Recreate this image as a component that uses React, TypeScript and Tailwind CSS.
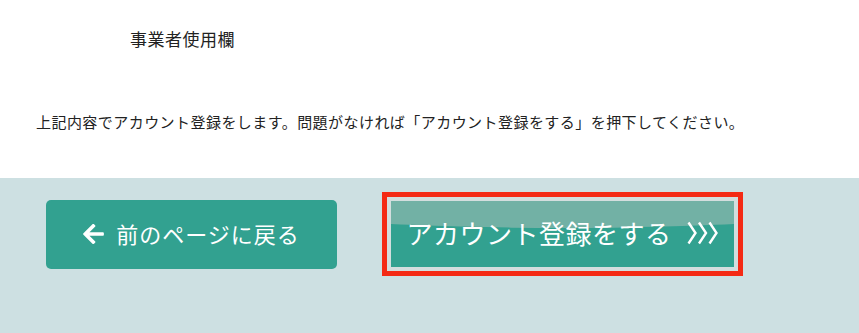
import React from "react";

function ArrowLeft() {
  return (
    <svg width="21" height="20" viewBox="0 40 448 432" fill="white" aria-hidden="true">
      <path d="M257.5 445.1l-22.2 22.2c-9.4 9.4-24.6 9.4-33.9 0L7 273c-9.4-9.4-9.4-24.6 0-33.9L201.4 44.7c9.4-9.4 24.6-9.4 33.9 0l22.2 22.2c9.5 9.5 9.3 25-.4 34.3L136.6 216H424c13.3 0 24 10.7 24 24v32c0 13.3-10.7 24-24 24H136.6l120.5 114.8c9.8 9.3 10 24.8.4 34.3z" />
    </svg>
  );
}

function Chevrons() {
  return (
    <svg width="32" height="24" viewBox="0 0 32 24" fill="none" stroke="white" strokeWidth="2.4" strokeLinejoin="miter" aria-hidden="true">
      <path d="M1.5 1.5 L8.5 12 L1.5 22.5" />
      <path d="M12 1.5 L19 12 L12 22.5" />
      <path d="M22.5 1.5 L29.5 12 L22.5 22.5" />
    </svg>
  );
}

export default function App() {
  return (
    <div className="w-[859px] h-[333px] overflow-hidden text-[#222] font-['Noto_Sans_CJK_JP',sans-serif]">
      <div className="h-[178px] bg-white">
        <div className="pt-[27px] pl-[130px] text-[17px] leading-[24px] tracking-[0.5px]">
          事業者使用欄
        </div>
        <p className="mt-[60px] pl-[36px] text-[15px] leading-[22px] tracking-[0.45px]">
          上記内容でアカウント登録をします。問題がなければ「アカウント登録をする」を押下してください。
        </p>
      </div>

      <div className="h-[155px] bg-[#cde0e2] pt-[14px] pl-[46px]">
        <div className="flex items-center gap-[45px]">
          <button className="flex h-[69px] w-[291px] items-center justify-center gap-[12px] rounded-[5px] bg-[#32a190] text-white">
            <ArrowLeft />
            <span className="text-[22px] leading-none tracking-[1px] -mt-[2px]">前のページに戻る</span>
          </button>

          <div className="border-[5px] border-[#f42a14] bg-[#d3dede] p-[4px]">
            <button className="relative flex h-[66px] w-[343px] items-center justify-center gap-[15px] overflow-hidden bg-[#32a190] text-white">
              <div className="absolute left-1/2 top-[-120px] h-[147px] w-[1050px] -translate-x-1/2 rounded-[50%] bg-[#72b1a5]" />
              <span className="relative text-[26px] leading-none tracking-[0.5px] -mt-[3px]">アカウント登録をする</span>
              <span className="relative -mt-[2px]">
                <Chevrons />
              </span>
            </button>
          </div>
        </div>
      </div>
    </div>
  );
}
